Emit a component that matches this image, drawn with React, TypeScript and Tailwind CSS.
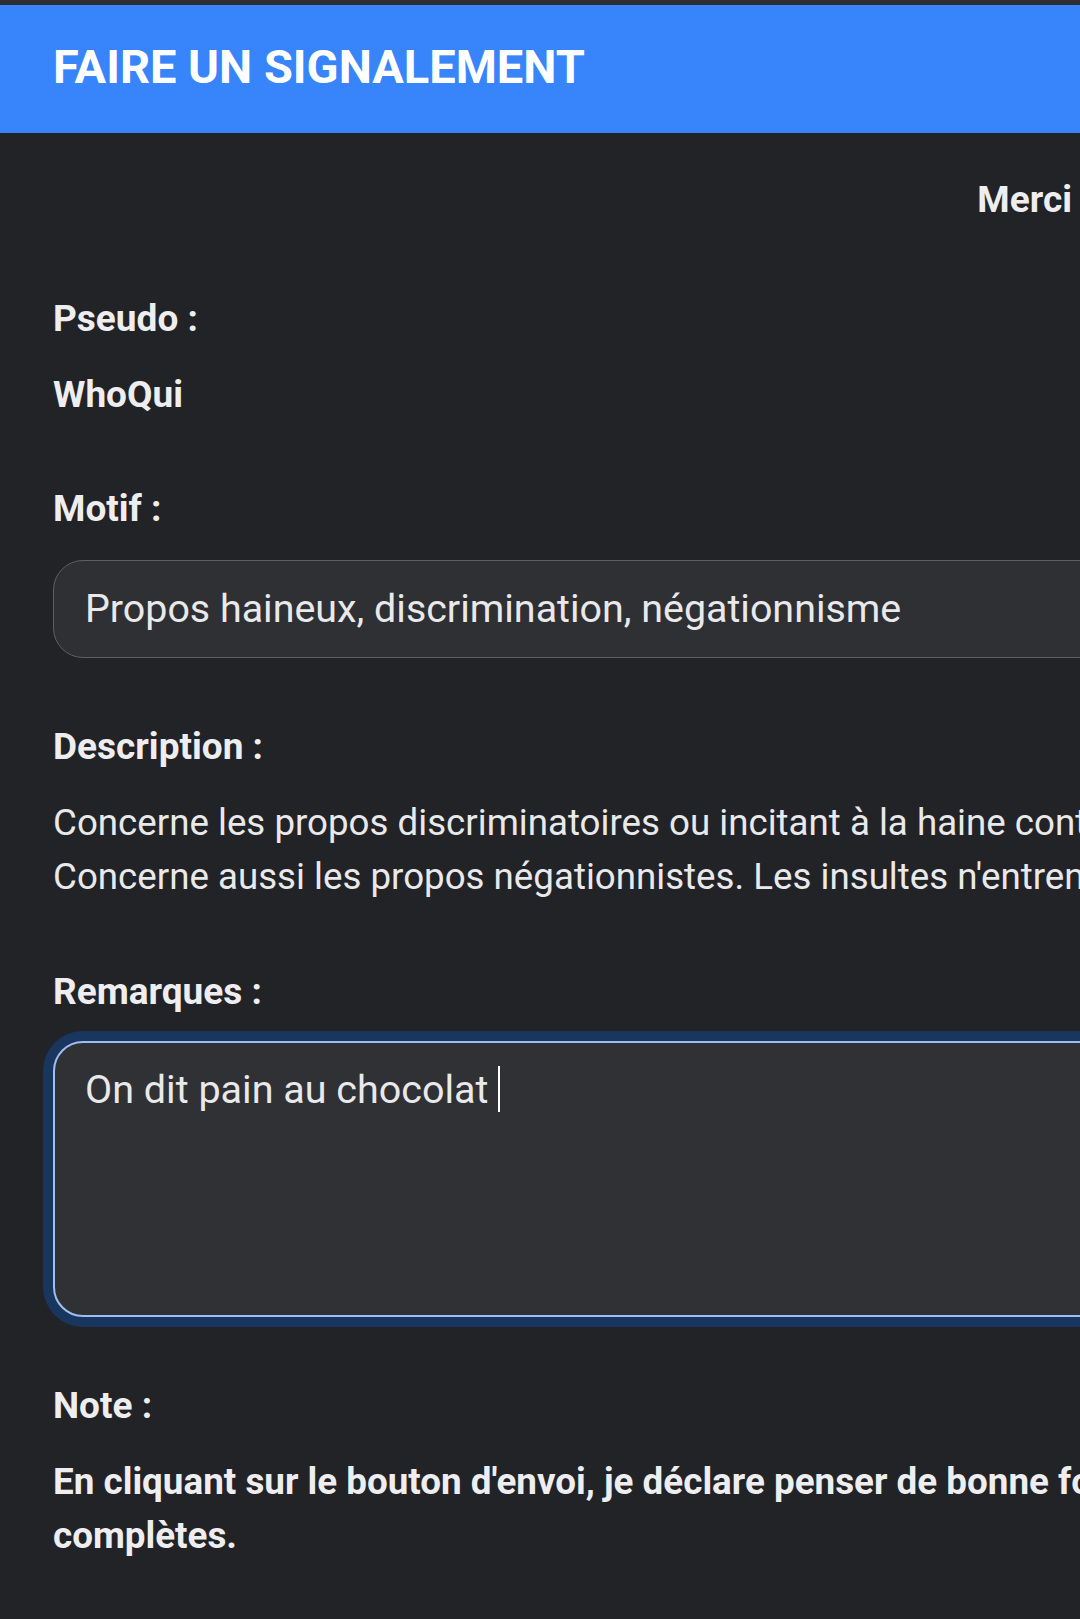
export default function App() {
  return (
    <main className="min-h-screen w-full overflow-hidden bg-[#222327] font-[family-name:Roboto,'Noto_Sans',sans-serif] text-[#eeeef0]">
      <div className="h-[5px] w-full bg-[#2e2f33]" />
      <header className="h-[128px] w-full bg-[#3884fb] px-[53px] pt-[39px]">
        <h1 className="whitespace-nowrap text-[47px] font-bold leading-[46px] text-white">FAIRE UN SIGNALEMENT</h1>
      </header>

      <p className="mt-[40px] whitespace-nowrap pr-[8px] text-right text-[37px] font-bold leading-[54px]">Merci</p>

      <form className="w-[1400px] px-[53px] pb-[60px]">
        <p className="mt-[65px] text-[37px] font-bold leading-[54px]">Pseudo :</p>
        <p className="mt-[22px] text-[37px] font-bold leading-[54px]">WhoQui</p>

        <p className="mt-[60px] text-[37px] font-bold leading-[54px]">Motif :</p>
        <div className="mt-[24px] flex h-[98px] items-center rounded-[30px] border border-[#5e5f63] bg-[#2f3034] pl-[31px]">
          <span className="whitespace-nowrap text-[39.4px] leading-[46px] text-[#e9e9eb]">
            Propos haineux, discrimination, négationnisme
          </span>
        </div>

        <p className="mt-[62px] text-[37px] font-bold leading-[54px]">Description :</p>
        <div className="mt-[22px] text-[36.7px] leading-[54px] text-[#e9e9eb]">
          <p className="whitespace-nowrap">
            Concerne les propos discriminatoires ou incitant à la haine contre une personne ou un groupe de personnes.
          </p>
          <p className="whitespace-nowrap">
            Concerne aussi les propos négationnistes. Les insultes n'entrent pas dans cette catégorie.
          </p>
        </div>

        <p className="mt-[61px] text-[37px] font-bold leading-[54px]">Remarques :</p>
        <div className="mt-[22px] h-[276px] rounded-[30px] border-2 border-[#9fbff2] bg-[#303135] pl-[30px] pt-[20px] shadow-[0_0_0_10px_#19365f]">
          <p className="whitespace-nowrap text-[39.5px] leading-[54px] text-[#e9e9eb]">
            On dit pain au chocolat
            <span className="ml-[9px] inline-block h-[46px] w-[2px] bg-white align-[-9px]" />
          </p>
        </div>

        <p className="mt-[62px] text-[37px] font-bold leading-[54px]">Note :</p>
        <div className="mt-[22px] text-[36.8px] font-bold leading-[54px]">
          <p className="whitespace-nowrap">
            En cliquant sur le bouton d'envoi, je déclare penser de bonne foi que les informations fournies sont exactes et
          </p>
          <p>complètes.</p>
        </div>
      </form>
    </main>
  );
}
